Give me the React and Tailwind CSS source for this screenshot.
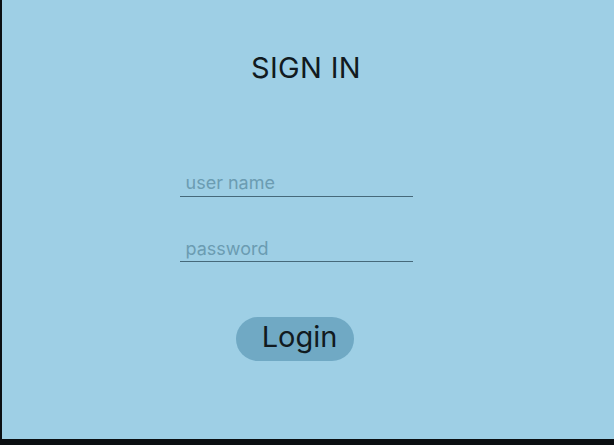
export default function App() {
  return (
    <div className="w-[614px] h-[445px] bg-[#0b0f12] flex flex-col" style={{ fontFamily: 'Inter, "Liberation Sans", sans-serif' }}>
      <div className="h-[439px] ml-[2px] bg-[#9ecfe5] flex flex-col items-center">
        <h1 className="mt-[50px] ml-[-4px] text-[29px] leading-[36px] text-[#111a20] font-normal tracking-[0.3px]">SIGN IN</h1>
        <div className="mt-[84px] w-[233px] ml-[-24px] flex flex-col">
          <div className="border-b border-[#46697a] pl-[6px] pt-[1px] pb-[1px]">
            <span className="text-[18px] leading-[23px] text-[#6b9cb2]">user name</span>
          </div>
          <div className="mt-[39px] border-b border-[#46697a] pl-[6px] pt-[1px]">
            <span className="text-[18px] leading-[23px] text-[#6b9cb2]">password</span>
          </div>
        </div>
        <button className="mt-[55px] ml-[-26px] w-[118px] h-[44px] rounded-full bg-[#70a9c4] text-[29px] leading-none text-[#111a20] flex items-center justify-center pl-[9px] pb-[6px]">
          Login
        </button>
      </div>
    </div>
  );
}
